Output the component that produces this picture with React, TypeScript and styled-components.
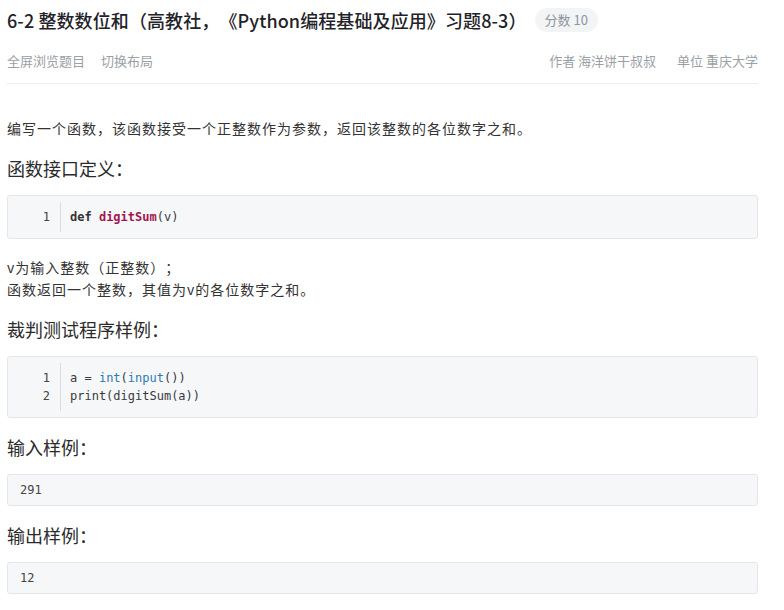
import React from "react";
import styled, { createGlobalStyle } from "styled-components";

const Global = createGlobalStyle`
  html, body { margin: 0; padding: 0; background: #fff; }
  body {
    font-family: "Noto Sans CJK SC", "Noto Sans", sans-serif;
    color: #333;
    text-spacing-trim: space-all;
  }
`;

const Page = styled.div`
  width: 751px;
  padding: 8px 0 0 7px;
`;

const TitleRow = styled.div`
  display: flex;
  align-items: center;
  height: 24px;
`;

const Title = styled.h1`
  margin: 0;
  font-size: 18px;
  line-height: 24px;
  font-weight: 500;
  letter-spacing: 0.1px;
  color: #1f2329;
`;

const Badge = styled.span`
  margin-left: 8px;
  height: 24px;
  padding: 0 10px;
  border-radius: 12px;
  background: #f3f4f6;
  color: #8f959e;
  font-size: 13px;
  line-height: 24px;
`;

const MetaRow = styled.div`
  display: flex;
  justify-content: space-between;
  margin-top: 18px;
  padding-bottom: 11px;
  border-bottom: 1px solid #eceef1;
  font-size: 13px;
  line-height: 22px;
  color: #9aa0a6;
`;

const MetaGroup = styled.div<{ $gap: number }>`
  display: flex;
  gap: ${(p) => p.$gap}px;
`;

const Body = styled.div`
  padding-top: 33px;
`;

const Para = styled.p<{ $top?: number }>`
  margin: ${(p) => p.$top ?? 0}px 0 0;
  font-size: 14px;
  letter-spacing: 1px;
  line-height: 22px;
  color: #333;
`;

const Heading = styled.h3`
  margin: 16px 0 14px;
  font-size: 18px;
  line-height: 26px;
  font-weight: 400;
  color: #2b2b2b;
`;

const CodeBox = styled.div`
  display: flex;
  border: 1px solid #e4e6e9;
  border-radius: 3px;
  background: #f6f7f9;
  padding: 6px 0;
  font-family: "DejaVu Sans Mono", "Liberation Mono", monospace;
  font-size: 12px;
  line-height: 18px;
  color: #383a42;
`;

const Gutter = styled.div`
  width: 42px;
  padding: 6px 10px 6px 0;
  text-align: right;
  border-right: 1px solid #d9dbde;
  color: #444;
`;

const Lines = styled.pre`
  margin: 0;
  padding: 6px 0 6px 9px;
  font: inherit;
  white-space: pre;
`;

const Kw = styled.span`
  font-weight: bold;
  color: #333;
`;

const Fn = styled.span`
  font-weight: bold;
  color: #a3154f;
`;

const Builtin = styled.span`
  color: #2a7bb0;
`;

const SampleBox = styled.pre`
  margin: 0;
  border: 1px solid #e4e6e9;
  border-radius: 3px;
  background: #f6f7f9;
  padding: 7px 12px;
  font-family: "DejaVu Sans Mono", "Liberation Mono", monospace;
  font-size: 12px;
  line-height: 16px;
  color: #444;
`;

export default function App() {
  return (
    <>
      <Global />
      <Page>
        <TitleRow>
          <Title>6-2 整数数位和（高教社，《Python编程基础及应用》习题8-3）</Title>
          <Badge>分数 10</Badge>
        </TitleRow>
        <MetaRow>
          <MetaGroup $gap={16}>
            <span>全屏浏览题目</span>
            <span>切换布局</span>
          </MetaGroup>
          <MetaGroup $gap={21}>
            <span>作者 海洋饼干叔叔</span>
            <span>单位 重庆大学</span>
          </MetaGroup>
        </MetaRow>
        <Body>
          <Para>编写一个函数，该函数接受一个正整数作为参数，返回该整数的各位数字之和。</Para>
          <Heading>函数接口定义：</Heading>
          <CodeBox>
            <Gutter>1</Gutter>
            <Lines>
              <Kw>def</Kw> <Fn>digitSum</Fn>(v)
            </Lines>
          </CodeBox>
          <Para $top={17}>
            v为输入整数（正整数）；
            <br />
            函数返回一个整数，其值为v的各位数字之和。
          </Para>
          <Heading>裁判测试程序样例：</Heading>
          <CodeBox>
            <Gutter>
              1<br />2
            </Gutter>
            <Lines>
              {"a = "}
              <Builtin>int</Builtin>(<Builtin>input</Builtin>()){"\n"}print(digitSum(a))
            </Lines>
          </CodeBox>
          <Heading>输入样例：</Heading>
          <SampleBox>291</SampleBox>
          <Heading>输出样例：</Heading>
          <SampleBox>12</SampleBox>
        </Body>
      </Page>
    </>
  );
}
